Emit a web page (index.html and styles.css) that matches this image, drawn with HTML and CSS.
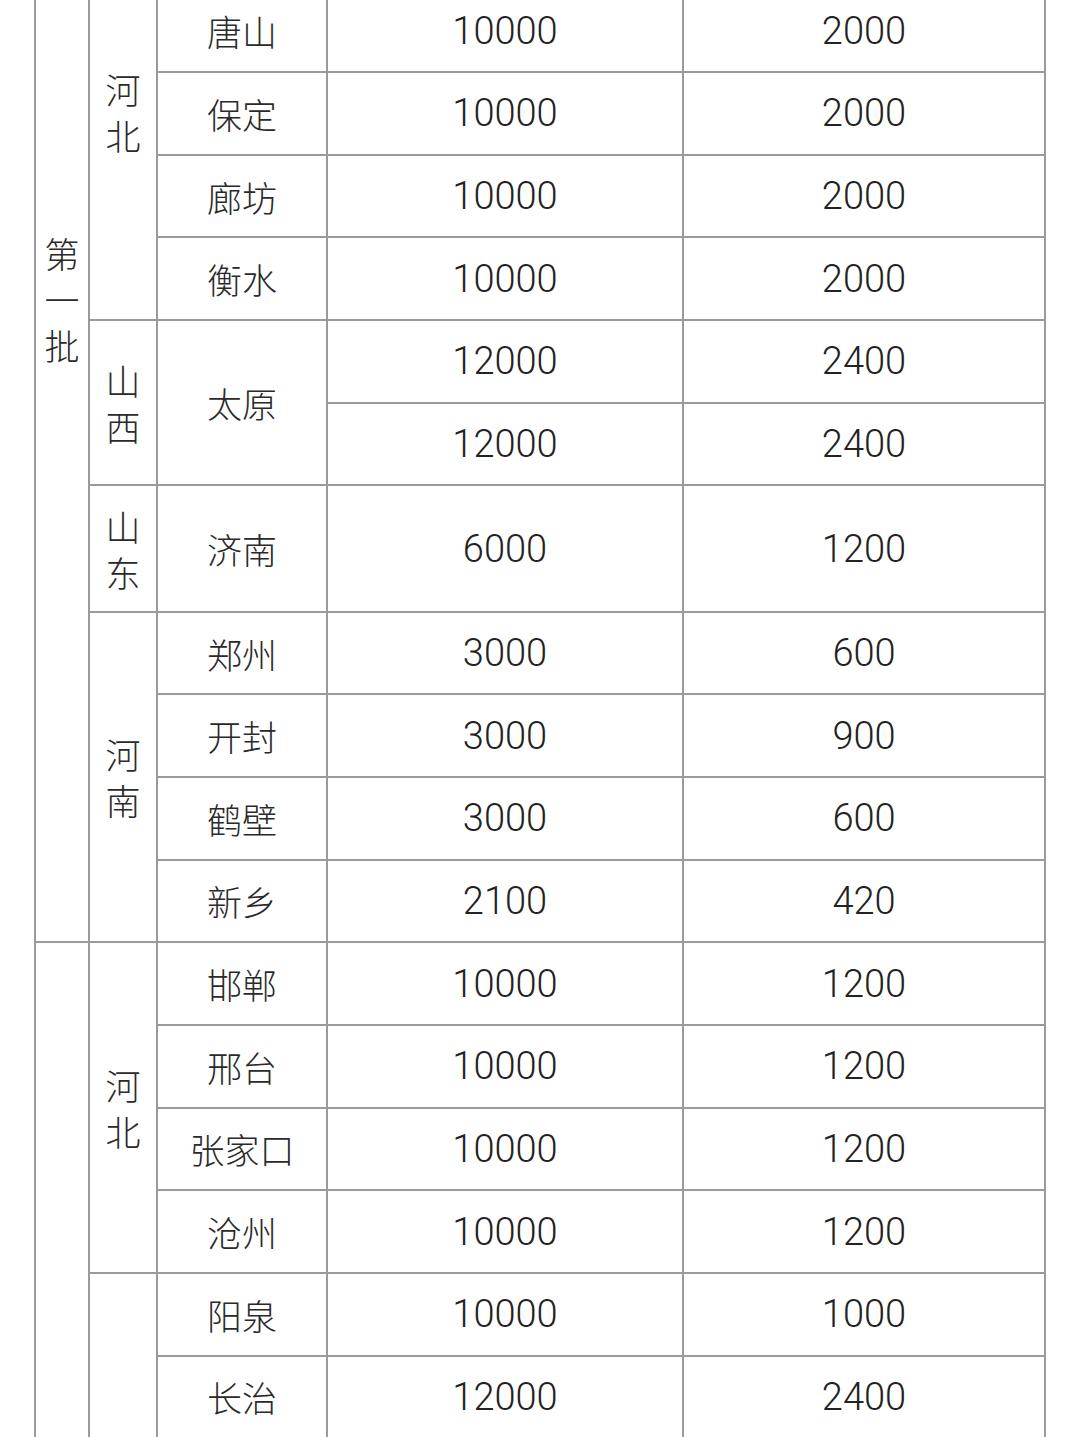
FILE: index.html
```html
<!DOCTYPE html>
<html lang="zh-CN">
<head>
<meta charset="utf-8">
<title>表格</title>
<link rel="stylesheet" href="styles.css">
</head>
<body>
<div class="viewport">
<table class="grid">
  <colgroup>
    <col class="c-batch">
    <col class="c-prov">
    <col class="c-city">
    <col class="c-a">
    <col class="c-b">
  </colgroup>
  <tbody>
    <tr>
      <td class="batch batch-first" rowspan="11"><span class="vt">第<br>一<br>批</span></td>
      <td class="prov prov-first" rowspan="4"><span class="vt">河<br>北</span></td>
      <td class="city">唐山</td><td class="num">10000</td><td class="num">2000</td>
    </tr>
    <tr><td class="city">保定</td><td class="num">10000</td><td class="num">2000</td></tr>
    <tr><td class="city">廊坊</td><td class="num">10000</td><td class="num">2000</td></tr>
    <tr><td class="city">衡水</td><td class="num">10000</td><td class="num">2000</td></tr>
    <tr>
      <td class="prov" rowspan="2"><span class="vt">山<br>西</span></td>
      <td class="city" rowspan="2">太原</td><td class="num">12000</td><td class="num">2400</td>
    </tr>
    <tr><td class="num">12000</td><td class="num">2400</td></tr>
    <tr class="tall">
      <td class="prov"><span class="vt">山<br>东</span></td>
      <td class="city">济南</td><td class="num">6000</td><td class="num">1200</td>
    </tr>
    <tr>
      <td class="prov" rowspan="4"><span class="vt">河<br>南</span></td>
      <td class="city">郑州</td><td class="num">3000</td><td class="num">600</td>
    </tr>
    <tr><td class="city">开封</td><td class="num">3000</td><td class="num">900</td></tr>
    <tr><td class="city">鹤壁</td><td class="num">3000</td><td class="num">600</td></tr>
    <tr><td class="city">新乡</td><td class="num">2100</td><td class="num">420</td></tr>
    <tr>
      <td class="batch" rowspan="6"></td>
      <td class="prov" rowspan="4"><span class="vt">河<br>北</span></td>
      <td class="city">邯郸</td><td class="num">10000</td><td class="num">1200</td>
    </tr>
    <tr><td class="city">邢台</td><td class="num">10000</td><td class="num">1200</td></tr>
    <tr><td class="city">张家口</td><td class="num">10000</td><td class="num">1200</td></tr>
    <tr><td class="city">沧州</td><td class="num">10000</td><td class="num">1200</td></tr>
    <tr>
      <td class="prov" rowspan="2"></td>
      <td class="city">阳泉</td><td class="num">10000</td><td class="num">1000</td>
    </tr>
    <tr><td class="city">长治</td><td class="num">12000</td><td class="num">2400</td></tr>
  </tbody>
</table>
</div>
</body>
</html>
```

FILE: styles.css
```css
html, body {
  margin: 0;
  padding: 0;
  background: #ffffff;
}

.viewport {
  width: 1080px;
  height: 1437px;
  overflow: hidden;
  background: #ffffff;
}

.grid {
  border-collapse: collapse;
  table-layout: fixed;
  width: 1012px;
  margin-top: -11.6px;
  margin-left: 34px;
  font-family: "Liberation Sans", "Noto Sans CJK SC", sans-serif;
  color: #2a2a2a;
}

.c-batch { width: 54px; }
.c-prov { width: 68px; }
.c-city { width: 170px; }
.c-a { width: 356px; }
.c-b { width: 362px; }

.grid td {
  border: 2px solid #9a9a9a;
  padding: 0;
  height: 80.65px;
  text-align: center;
  vertical-align: middle;
  line-height: 1;
}

.grid tr.tall td {
  height: 124.5px;
}

.grid td.num {
  font-family: Roboto, "Liberation Sans", sans-serif;
  font-size: 38px;
  font-weight: 300;
  color: #222222;
}

.grid td.city {
  font-family: "Noto Sans CJK SC", sans-serif;
  font-size: 35px;
  font-weight: 300;
}

.grid td.prov,
.grid td.batch {
  font-family: "Noto Sans CJK SC", sans-serif;
  font-size: 35px;
  font-weight: 300;
}

.vt {
  display: inline-block;
  line-height: 46px;
}

.grid td.batch-first {
  vertical-align: top;
  padding-top: 240px;
}

.grid td.prov-first {
  vertical-align: top;
  padding-top: 76px;
}
```
